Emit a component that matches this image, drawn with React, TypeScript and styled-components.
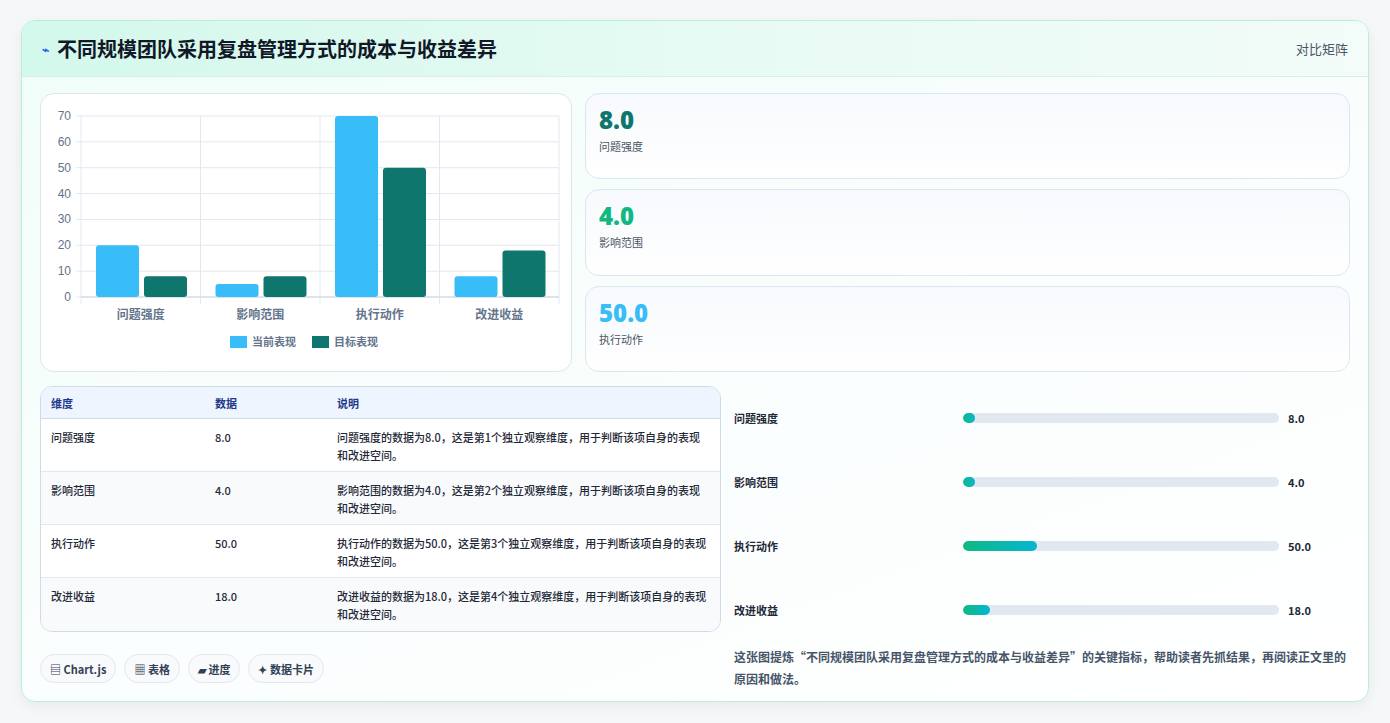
import React from "react";
import styled, { createGlobalStyle } from "styled-components";

const Global = createGlobalStyle`
  html, body { margin: 0; padding: 0; background: #f4f6f8; }
  body { font-family: "Noto Sans CJK SC", "Noto Sans", sans-serif; }
  * { box-sizing: border-box; }
`;

const Page = styled.div`
  width: 1390px; height: 723px; padding: 20px 21px 21px 21px; background: #f6f7f9;
`;
const Card = styled.div`
  height: 682px; border: 1px solid #b9eedd; border-radius: 14px; overflow: hidden;
  background: linear-gradient(160deg, #f0fdf8 0%, #fbfefe 60%, #ffffff 100%);
  box-shadow: 0 4px 14px rgba(0,0,0,0.06); display: flex; flex-direction: column;
`;
const Header = styled.div`
  height: 56px; flex: none; display: flex; align-items: center; justify-content: space-between;
  padding: 0 20px 0 20px; background: linear-gradient(90deg, #d3f8ec, #e9fbf4 60%, #f3fcf9);
  border-bottom: 1px solid #d6eef0;
`;
const Title = styled.h1`
  margin: 0; font-size: 20px; font-weight: 700; color: #111827; display: flex; align-items: center; gap: 8px;
`;
const Tag = styled.span` font-size: 13px; color: #4b5563; `;
const Body = styled.div`
  flex: 1; padding: 16px 18px 16px 18px; display: flex; flex-direction: column; gap: 15px;
`;
const Split = styled.div<{ left: number; h?: number }>`
  display: grid; grid-template-columns: ${p => p.left}px 1fr; column-gap: 13px;
  ${p => (p.h ? `height: ${p.h}px;` : "")}
`;
const ChartBox = styled.div`
  background: #fff; border: 1px solid #dbe7f0; border-radius: 14px;
`;
const Stats = styled.div` display: flex; flex-direction: column; gap: 10px; `;
const Stat = styled.div`
  flex: 1; background: linear-gradient(180deg, #f7f9fd, #ffffff); border: 1px solid #dbe7f0; border-radius: 14px;
  padding: 10px 13px;
`;
const StatValue = styled.div<{ c: string }>`
  font-family: "Open Sans", sans-serif; font-weight: 800; font-size: 24px; line-height: 32px; color: ${p => p.c};
`;
const StatLabel = styled.div` font-size: 11px; color: #4b5563; margin-top: 2px; `;
const Left = styled.div` display: flex; flex-direction: column; gap: 22px; `;
const Table = styled.div`
  border: 1px solid #cfdbe6; border-radius: 12px; overflow: hidden; background: #fff;
`;
const Row = styled.div<{ head?: boolean; alt?: boolean }>`
  display: grid; grid-template-columns: 164px 122px 1fr; padding: 0 10px;
  min-height: ${p => (p.head ? "32px" : "53px")}; align-items: ${p => (p.head ? "center" : "start")};
  padding-top: ${p => (p.head ? "0" : "9px")};
  background: ${p => (p.head ? "#eef5fe" : p.alt ? "#f8fafc" : "#fff")};
  border-bottom: 1px solid ${p => (p.head ? "#cfdbe6" : "#e2e8f0")};
  &:last-child { border-bottom: none; }
  font-size: 11px; line-height: 18px; color: ${p => (p.head ? "#1e3a8a" : "#1f2937")};
  font-weight: ${p => (p.head ? 700 : 500)};
`;
const Chips = styled.div` display: flex; gap: 8px; `;
const Chip = styled.span`
  height: 29px; padding: 0 9px; border: 1px solid #e2e8f0; border-radius: 15px; background: #f8fafc;
  display: inline-flex; align-items: center; gap: 3px; font-size: 11px; font-weight: 700; color: #334155;
`;
const Right = styled.div` display: flex; flex-direction: column; `;
const Bars = styled.div` display: flex; flex-direction: column; `;
const BarRow = styled.div`
  height: 64px; display: grid; grid-template-columns: 220px 316px auto; align-items: center; column-gap: 9px;
  font-size: 11px; font-weight: 700; color: #1f2937;
`;
const Track = styled.div` height: 10px; border-radius: 5px; background: #e2e8f0; overflow: hidden; `;
const Fill = styled.div` height: 100%; border-radius: 5px; background: linear-gradient(90deg, #10b981, #06b6d4); `;
const Note = styled.p`
  margin: 4px 0 0 0; font-size: 12px; line-height: 22px; color: #475569; font-weight: 700;
`;

const cats = ["问题强度", "影响范围", "执行动作", "改进收益"];
const cur = [20, 5, 70, 8];
const tgt = [8, 8, 50, 18];

function Chart() {
  const x0 = 40, x1 = 518, y0 = 203, scale = 181 / 70;
  const cw = (x1 - x0) / 4;
  return (
    <svg width="531" height="277" viewBox="0 0 531 277" style={{ display: "block" }}>
      {[0, 10, 20, 30, 40, 50, 60, 70].map(v => (
        <g key={v}>
          <line x1={x0 - 5} x2={x1} y1={y0 - v * scale} y2={y0 - v * scale} stroke="#e2e8f0" />
          <text x={x0 - 10} y={y0 - v * scale + 4} textAnchor="end" fontSize="12" fill="#64748b" fontFamily="Liberation Sans, sans-serif">{v}</text>
        </g>
      ))}
      {[0, 1, 2, 3, 4].map(i => (
        <line key={i} x1={x0 + i * cw} x2={x0 + i * cw} y1={y0 - 70 * scale} y2={y0 + 7} stroke="#e2e8f0" />
      ))}
      <line x1={x0} x2={x1} y1={y0} y2={y0} stroke="#cbd5e1" />
      {cats.map((c, i) => (
        <g key={c}>
          <rect x={x0 + i * cw + 15} y={y0 - cur[i] * scale} width="43" height={cur[i] * scale} rx="3" fill="#38bdf8" />
          <rect x={x0 + i * cw + 63} y={y0 - tgt[i] * scale} width="43" height={tgt[i] * scale} rx="3" fill="#0f766e" />
          <text x={x0 + i * cw + cw / 2} y={225} textAnchor="middle" fontSize="12" fill="#64748b" fontWeight="700">{c}</text>
        </g>
      ))}
      <rect x="189" y="242" width="17" height="12" fill="#38bdf8" />
      <text x="211" y="252" fontSize="11" fill="#64748b" fontWeight="700">当前表现</text>
      <rect x="271" y="242" width="17" height="12" fill="#0f766e" />
      <text x="293" y="252" fontSize="11" fill="#64748b" fontWeight="700">目标表现</text>
    </svg>
  );
}

const rows = [
  ["问题强度", "8.0", "问题强度的数据为8.0，这是第1个独立观察维度，用于判断该项自身的表现和改进空间。"],
  ["影响范围", "4.0", "影响范围的数据为4.0，这是第2个独立观察维度，用于判断该项自身的表现和改进空间。"],
  ["执行动作", "50.0", "执行动作的数据为50.0，这是第3个独立观察维度，用于判断该项自身的表现和改进空间。"],
  ["改进收益", "18.0", "改进收益的数据为18.0，这是第4个独立观察维度，用于判断该项自身的表现和改进空间。"],
];
const bars = [["问题强度", "8.0", 12], ["影响范围", "4.0", 12], ["执行动作", "50.0", 74], ["改进收益", "18.0", 27]] as const;

export default function App() {
  return (
    <Page>
      <Global />
      <Card>
        <Header>
          <Title><span style={{ color: "#2563eb", fontSize: 12 }}>⌁</span>不同规模团队采用复盘管理方式的成本与收益差异</Title>
          <Tag>对比矩阵</Tag>
        </Header>
        <Body>
          <Split left={532} h={278}>
            <ChartBox><Chart /></ChartBox>
            <Stats>
              <Stat><StatValue c="#0f766e">8.0</StatValue><StatLabel>问题强度</StatLabel></Stat>
              <Stat><StatValue c="#10b981">4.0</StatValue><StatLabel>影响范围</StatLabel></Stat>
              <Stat><StatValue c="#38bdf8">50.0</StatValue><StatLabel>执行动作</StatLabel></Stat>
            </Stats>
          </Split>
          <Split left={681}>
            <Left>
              <Table>
                <Row head><span>维度</span><span>数据</span><span>说明</span></Row>
                {rows.map((r, i) => (
                  <Row key={r[0]} alt={i % 2 === 1}><span>{r[0]}</span><span>{r[1]}</span><span>{r[2]}</span></Row>
                ))}
              </Table>
              <Chips>
                <Chip>▤ Chart.js</Chip><Chip>▦ 表格</Chip><Chip>▰ 进度</Chip><Chip>✦ 数据卡片</Chip>
              </Chips>
            </Left>
            <Right>
              <Bars>
                {bars.map(b => (
                  <BarRow key={b[0]}>
                    <span>{b[0]}</span>
                    <Track><Fill style={{ width: b[2] }} /></Track>
                    <span>{b[1]}</span>
                  </BarRow>
                ))}
              </Bars>
              <Note>这张图提炼“不同规模团队采用复盘管理方式的成本与收益差异”的关键指标，帮助读者先抓结果，再阅读正文里的原因和做法。</Note>
            </Right>
          </Split>
        </Body>
      </Card>
    </Page>
  );
}
